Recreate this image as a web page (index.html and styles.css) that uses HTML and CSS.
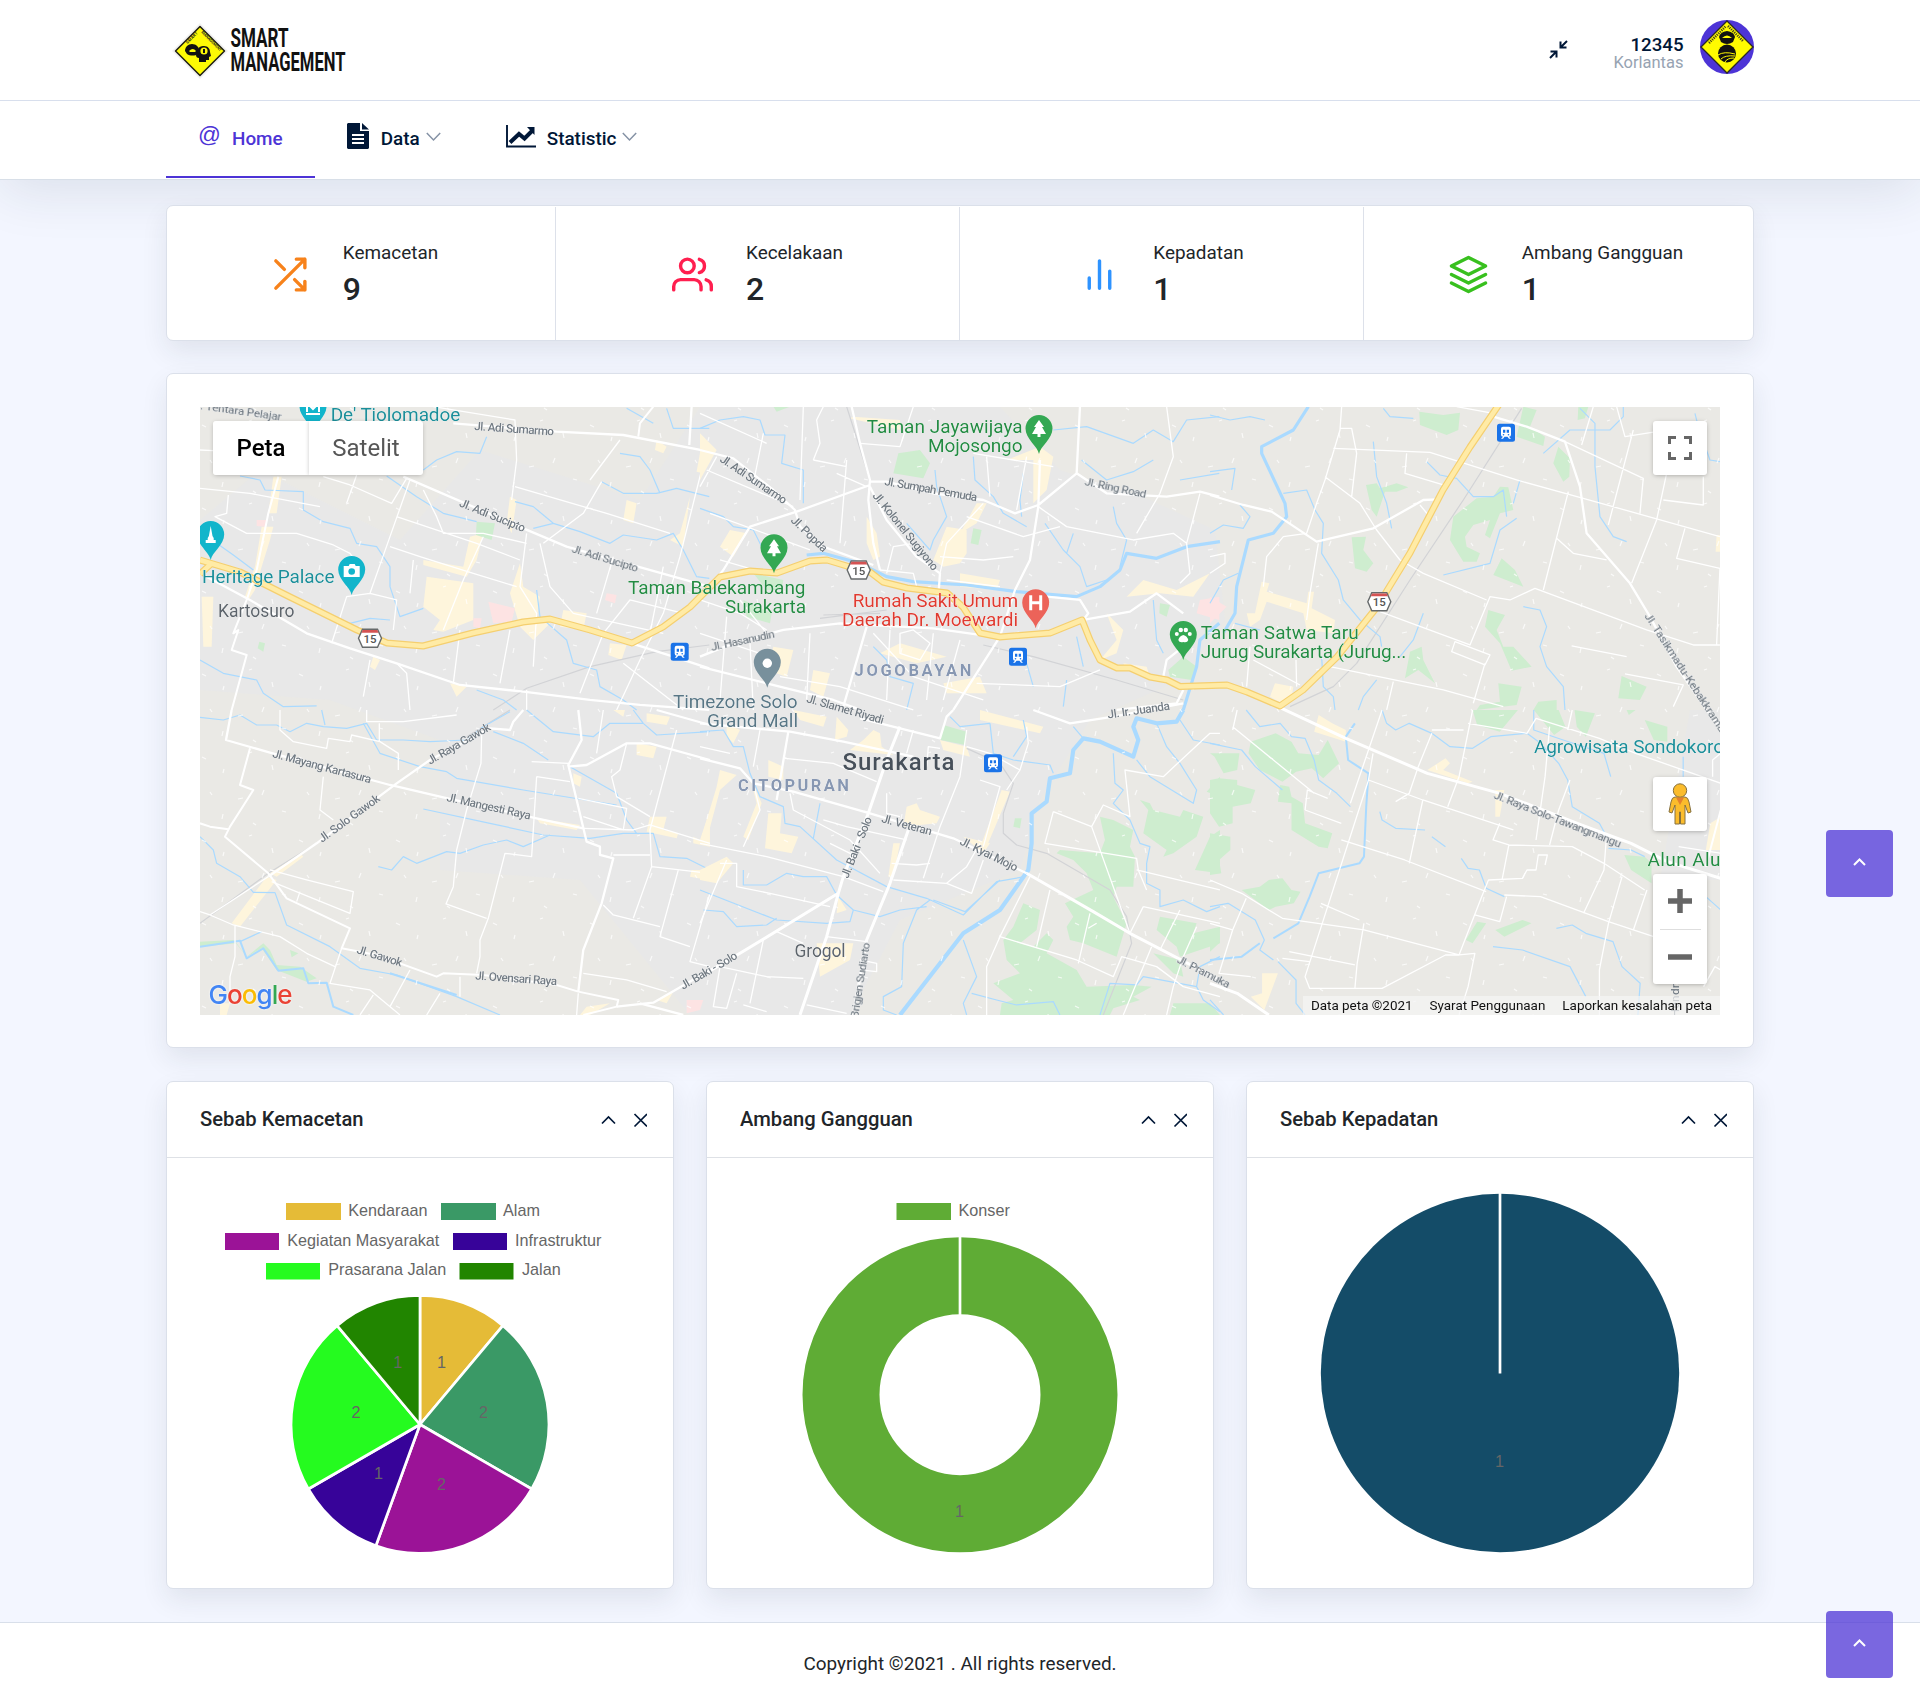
FILE: index.html
```html
<!DOCTYPE html>
<html lang="id">
<head>
<meta charset="utf-8">
<title>Smart Management</title>
<link rel="stylesheet" href="styles.css">
</head>
<body>
<header class="topbar">
  <div class="container topbar-inner">
    <svg class="logo" width="190" height="60" viewBox="166 21 190 60" role="img" aria-label="Smart Management">
      <path d="M200 23 228 51 200 79 172 51Z" fill="#f1f1f1"/>
      <path d="M200 26.500 224.500 51 200 75.500 175.500 51Z" fill="#fdfa05" stroke="#1d1d12" stroke-width="1.500" stroke-linejoin="round"/>
      <text class="logo-sign" transform="translate(187.500 44) rotate(-45)" textLength="15">SMART</text>
      <text class="logo-sign" transform="translate(201 32.500) rotate(45)" textLength="27">MANAGEMENT</text>
      <path d="M185 51c0-4 3-7 7-7s7 3 7 6l-1 4c-3 2-8 2-11 0z" fill="#111"/>
      <path d="M189 51q4-4 7 0l-1 1h-5z" fill="#fdfa05"/>
      <path d="M198 50c0-3 3-4 6-4 4 0 6 3 6 6l1 4-2 1v3h-3v2h-7v-4c-2 0-3-1-3-3z" fill="#111"/>
      <circle cx="204" cy="51" r="3.600" fill="#fdfa05"/><path d="M203 49h2v4h-2z" fill="#111"/>
      <text class="logo-word" x="230.500" y="47" textLength="58" lengthAdjust="spacingAndGlyphs">SMART</text>
      <text class="logo-word" x="230.500" y="71" textLength="115" lengthAdjust="spacingAndGlyphs">MANAGEMENT</text>
    </svg>
    <div class="user">
      <svg class="shrink" width="19" height="19" viewBox="0 0 19 19"><path d="M18 1 12 7M11.500 1.500v6h6M1 18l6-6M1.500 11.500h6v6" fill="none" stroke="#001737" stroke-width="2"/></svg>
      <div class="user-text"><span class="user-name">12345</span><span class="user-role">Korlantas</span></div>
      <svg class="avatar" width="54" height="54" viewBox="0 0 54 54">
        <circle cx="27" cy="27" r="27" fill="#4d34d6"/>
        <path d="M27 1 53 27 27 53 1 27Z" fill="#fffb00" stroke="#2b2920" stroke-width="1.300"/>
        <path d="M9 23 26 6M28 6 43 21" stroke="#44421a" stroke-width="2.500" stroke-dasharray="1.200 1"/>
        <path d="M19 17q1-5 8-6 7 1 8 6l-2 5q-6 4-12 0z" fill="#111"/><path d="M22 18q5-5 10 0z" fill="#fffb00"/>
        <circle cx="27" cy="33.500" r="9" fill="#111"/><path d="M18 35q6-4 17-1M21 39q4-4 14-3M25 42q2-4 9-4" stroke="#fffb00" stroke-width="1" fill="none"/>
      </svg>
    </div>
  </div>
</header>
<nav class="menu">
  <div class="container menu-inner">
    <a class="menu-item active"><span class="at">@</span><span>Home</span></a>
    <a class="menu-item">
      <svg class="doc" width="22" height="26" viewBox="0 0 22 26"><path d="M1 0h12v8h9v17l-1 1H1l-1-1V1z" fill="#001737"/><path d="M15 0v6.500h7z" fill="#001737"/><path d="M5 12h12M5 16h12M5 20h12" stroke="#fff" stroke-width="1.800"/></svg>
      <span>Data</span>
      <svg class="caret" width="15" height="10" viewBox="0 0 15 10"><path d="M.8 1 7.500 8 14.200 1" fill="none" stroke="#8592a5" stroke-width="1.500"/></svg>
    </a>
    <a class="menu-item">
      <svg class="trend" width="30" height="23" viewBox="0 0 30 23"><path d="M1 0v21.500h29" fill="none" stroke="#001737" stroke-width="1.900"/><path d="M4 17.500 13 9l5.500 4.500L26 6" fill="none" stroke="#001737" stroke-width="4"/><path d="M21 2h7.500v8z" fill="#001737"/></svg>
      <span>Statistic</span>
      <svg class="caret" width="15" height="10" viewBox="0 0 15 10"><path d="M.8 1 7.500 8 14.200 1" fill="none" stroke="#8592a5" stroke-width="1.500"/></svg>
    </a>
  </div>
</nav>

<main class="container content">
  <section class="card stats">
    <div class="stats-row">
      <div class="stat">
        <svg class="stat-icon orange" viewBox="0 0 24 24"><path d="M16 3h5v5M4 20 21 3M21 16v5h-5M15 15l6 6M4 4l5 5"/></svg>
        <div><p class="stat-label">Kemacetan</p><p class="stat-value">9</p></div>
      </div>
      <div class="stat">
        <svg class="stat-icon red" viewBox="0 0 24 24"><path d="M17 21v-2a4 4 0 0 0-4-4H5a4 4 0 0 0-4 4v2M23 21v-2a4 4 0 0 0-3-3.870M16 3.130a4 4 0 0 1 0 7.750"/><circle cx="9" cy="7" r="4"/></svg>
        <div><p class="stat-label">Kecelakaan</p><p class="stat-value">2</p></div>
      </div>
      <div class="stat">
        <svg class="stat-icon blue" viewBox="0 0 24 24"><path d="M18 20V10M12 20V4M6 20v-6"/></svg>
        <div><p class="stat-label">Kepadatan</p><p class="stat-value">1</p></div>
      </div>
      <div class="stat">
        <svg class="stat-icon green" viewBox="0 0 24 24"><path d="M12 2 2 7l10 5 10-5zM2 17l10 5 10-5M2 12l10 5 10-5"/></svg>
        <div><p class="stat-label">Ambang Gangguan</p><p class="stat-value">1</p></div>
      </div>
    </div>
  </section>

  <section class="card map-card">
    <div class="map">
      <svg class="map-canvas" width="1520" height="608" viewBox="200 407 1520 608">
        <defs>
          <pattern id="lanes" width="97" height="83" patternUnits="userSpaceOnUse"><path d="M8 10l4 2M30 22l-1 4M55 6l3-1M78 18l1 5M16 45l2 3M44 52l5-1M70 43l-2 5M88 64l4 1M28 72l1-5M59 76l3 2" stroke="#fff" stroke-width="1.200"/></pattern>
          <g id="train"><rect x="-9" y="-9" width="18" height="18" rx="2.500" fill="#1a73e8"/><path d="M-3-6h6q2 0 2 2v6q0 2-2 2l2 2H3L1.500 4h-3L-3 6h-2l2-2q-2 0-2-2v-6q0-2 2-2z" fill="#fff"/><path d="M-3-3h2.300v3H-3zM.7-3H3v3H.7z" fill="#1a73e8"/><circle cx="-2.500" cy="2" r=".8" fill="#1a73e8"/><circle cx="2.500" cy="2" r=".8" fill="#1a73e8"/></g>
          <path id="pin" d="M0 0C-1.500-8-13.500-15-13.500-25.500a13.500 13.500 0 0 1 27 0C13.500-15 1.500-8 0 0z"/>
          <path id="tree" d="M0-34-5-27h2l-4 7h5.500v3h3v-3H7l-4-7h2z" fill="#fff"/>
          <g id="shield"><path d="M-7.500-9h15L11.500 0 7.500 9h-15L-11.500 0z" fill="#fff" stroke="#666a6b" stroke-width="1.400"/><path d="M-7.300-8.300H7.300L8.500-5.500h-17z" fill="#d55353"/><text class="shield-no" y="4.500">15</text></g>
        </defs>
        <rect x="200" y="407" width="1520" height="608" fill="#eae9e5"/>
        <path d="M200 520 260 470 400 540 480 450 640 500 700 407 1000 407 1060 470 1150 500 1215 530 1225 620 1180 680 1090 720 1040 800 1020 870 900 920 850 1015 690 1015 580 880 440 870 440 740 330 700 200 690zM1690 710h30v170h-60z" fill="#e8e8e8"/>

        <g class="tile" transform="translate(190 400) scale(.3333)">
          <path class="built" d="M250 230h25l-15 110h-25zM215 380h35l-10 40-25 80-20 70-20 30-10-10 30-90zM840 410l40-10-20 80-30 50-130-35v-15l120 20zM710 530l140 20v110l-90 35-30-5 20-30-50-40zM990 490l10 70 50 30-10 70h50l-60 60-40-40-30-100zM1120 630l70 10-10 50-70-10zM960 290l20 10-15 100-15-30zM1310 300l30 10-10 60-30-10zM1400 120l30 20-10 20-25-10zM1530 160l28-10-18 70-20-5zM1500 290l-20 150-40-20 30-20zM35 590h35l-5 150H40zM1260 730l50 5-15 45-40-15zM780 850l50 10-30 30zM550 770l20 10-15 30-15-10z"/>
          <path class="clinic" d="M895 605l80 20-10 40-55 5zM850 655h25l-5 30-20-5zM1250 580l30 5-5 25-30-10zM200 360h30l-5 20-25-2z"/>
          <path class="park" d="M860 365l55 5-10 50-47-15zM208 725l17 5-5 25-17-10z"/>
          <path class="rail" d="M910 930 1010 865 1200 800 1400 755 1558 735"/>
          <path class="creek" d="M150 228 210 240 225 270 340 275 340 330 400 365 480 385 500 430 560 440 600 500 600 560 630 650 700 625M590 228 680 290 760 340 860 365M700 210 740 180 800 155 870 160 890 110M975 305 1030 320 1090 370 1170 395 1260 430 1300 405 1400 420 1450 400 1480 450 1520 530 1558 535M1030 385 1090 370M1235 245 1300 280 1400 280 1460 265 1558 290M1290 160 1350 170 1380 210 1410 280M1040 570 1050 650 1130 720 1150 790 1220 810 1230 860 1300 900 1340 930M480 670 540 655 600 660M80 430 130 465 190 510M30 780 100 820 200 840 220 880 280 920 380 918M860 870 940 900 980 930M1310 25 1390 70M1430 25 1450 85 1558 85"/>
          <path class="lane" d="M730 20 975 60 980 180 965 300M1200 240 1290 120M500 225 470 310M400 230 480 255 605 310 650 235M660 240 600 410 540 580 470 590 425 730M30 265 180 280 390 320M115 285 110 340 75 350 170 400 320 400 430 435 480 460 510 500M620 350 860 430 990 480M975 260 1180 320 1250 340 1440 400M700 270 740 350 760 400 880 400 1010 430M600 440 690 470 850 520 980 560M1010 400 990 560 1040 640 1030 800M670 480 660 580M540 580 620 600 610 690M540 780 520 890M620 790 650 820 660 930M810 690 790 850M960 690 930 850M1010 870V930M1480 640 1320 600 1240 700 1170 880M1270 470 1220 640M1420 500 1380 700M1540 190 1470 470 1420 640 1350 780 1280 930M30 150 70 152M1235 245 1180 340 1060 430M1050 430 1080 560 1150 640 1420 700M880 410 820 540 760 690M1300 790 1480 930"/>
          <path class="street" d="M265 230 235 340 200 510 170 600 130 700 145 690 125 750 170 765 125 930M1390 20 1350 70 1345 110"/>
          <path class="road" d="M790 70 1100 95 1300 105 1558 155M640 230 1000 385 1130 440 1558 560M30 520 180 600 350 700 480 745 620 790 810 855 1000 875 1200 900 1350 915 1558 930M1325 730 1450 770 1558 805M1505 20 1498 135"/>
        </g>
        <g class="tile" transform="translate(700 400) scale(.3333)">
          <path class="built" d="M740 380l60 10v70l-20 30-50 10-30-20zM780 520l120 20-10 30-110-10zM600 730l140 40-90 20-110-30zM730 850l110-20 20 50H740zM460 50l140 10v30L450 55zM1020 140l40 30-20 100-40 40V180h-80zM500 350l30 50 10 70-20 10-20-50zM830 310h30l-30 60-50 30zM0 100l50 50L0 240zM90 390l50 10-40 70-40-30zM1330 540l100 30 100-50-50 70-100-10-100 10zM1220 640l50 50-20 70-50 20 50-60zM1270 790l70 10 10 30-70-20zM340 810l50 10-20 70-40-20zM220 740l60 10-20 80-60-20z"/>
          <path class="park" d="M595 160l65-10 30 40-20 45-90-15zM820 385l25 5-10 45-23-5zM160 520l90 20-5 30h-45zM130 600l85 40-5 30-70-20zM1380 610l30 5-10 35-22-10zM1450 770l40 30-15 40-65-10-5-20zM220 20h50l-40 15z"/>
          <path class="clinic" d="M1500 600l58-10v70l-68-20z"/>
          <path class="rail" d="M440 20 510 240M850 735 1000 770 1250 840 1450 900M360 655 560 630M370 645 540 640"/>
          <path class="creek" d="M0 85 60 60 130 50 180 60 195 105 255 105 245 190 310 210 310 310M0 325 70 350 100 380 160 390 190 450M820 170 825 240 880 290 910 340 980 380M970 220 960 300 965 350M705 210 710 260 740 350 700 420 690 450 620 370M1145 180 1220 240 1300 215 1360 180M1060 90 1160 80 1300 130 1360 90 1420 125 1460 60 1558 50M1035 370 1090 450 1140 500 1160 560 1220 540M1240 320 1250 370 1280 420 1260 500M1360 600 1370 720 1390 760M1130 710 1150 800M520 740 560 780 570 830 640 850 620 930M980 790 1000 860M1100 840 1090 920M1120 400 1100 460M1440 240 1558 220"/>
          <path class="canal" d="M320 465 370 460 480 490 560 530 640 545 800 555 950 575 1130 590 1200 560 1260 510 1280 460 1370 475 1460 440 1560 425M1558 670 1500 720 1490 800 1450 930"/>
          <path class="lane" d="M310 20 300 300M370 20 350 60 360 130 340 180M20 210 280 320M50 170 0 260M30 340 330 450M640 20 600 140 480 130M820 160 1060 200M1015 320 1100 380 1300 420 1420 400 1460 430 1470 520 1440 550M800 350 970 410 1080 380M1400 20 1420 170 1380 280 1310 400M1500 280 1460 430M720 470 850 480 940 470M740 540 900 560M850 310 740 430 720 520M600 700 640 690 690 730 660 780 600 760zM860 170 870 290M980 170 950 330M0 600 120 640 200 690M120 600 200 700M520 700 640 830 850 900M240 830 420 860 640 930M330 700 320 900M150 730 160 930M830 850 1080 860 1200 810M410 220 500 260M440 180 420 430M540 510 640 520 650 560M0 40 200 130M190 100 160 250M340 180 440 200M60 480 200 520M560 520 580 440 640 430M700 700 680 900M780 720 730 900M570 690 560 900M80 650 60 900M0 700 180 760"/>
          <path class="road" d="M455 20 480 130 510 240 505 300 520 430 540 510M0 600 70 510 150 380 290 335 510 255M0 150 100 175 220 270 285 330 300 380 370 440 520 495M510 245 560 245 700 280 850 300 945 340 1015 315 1130 220 1140 20M510 260 560 360 650 470 720 520 715 590M1130 220 1220 280 1400 290 1500 275 1558 290M1020 180 1015 320 990 480 945 570 900 710 760 930M0 770 100 730 250 690 420 670 700 685 840 705M0 800 200 850 400 900 470 925M1040 590 1140 600 1165 640 1150 660 1290 635 1370 580 1450 640M500 680 430 920M1450 860 1390 830 1400 780 1450 740M1450 870 1430 910 1250 930"/>
        </g>
        <g class="tile" transform="translate(1210 400) scale(.3333)">
          <path class="built" d="M155 545l23 5-8 25 120 35 5-35h17l-7 50 70 35-5 40-80-10-10-50-110-35-20 55-30 20-10-40h25zM195 850l55 10-5 30-30 20-35-20zM1520 405h12v50h-15z"/>
          <path class="park" d="M628 35l72 10 50-7-5 52-35 15-80-30zM940 20l40 10-20 50 45 30-5 28-80-28zM1105 20h30l-10 35-22 5zM1045 140l35 35-2 55-18 15-30-55zM468 255l32-5 10 15 50-15 35 12-35 13h-35l-25 75-15-20zM800 295l50-5 20-30 25 2 15 68-40 10-30 75-15-10 15-45-50 15-25 35 5 30 40 20-10 25h-40l-40-65 10-70zM425 412l43-2-8 40 30 40-20 25-35-10zM875 475l40 35 25 50-90-35zM835 630l50 15-25 45 20 50h30l55 60-60 12-35-82-45-50zM600 755l35-15 5 40 35 70-50-40-40 25zM865 850l70 10-15 55-120 15 10-15 60-10zM1235 828l75 32-20 40-65-5zM985 905l55-5v30h-70z"/>
          <path class="clinic" d="M0 590l50 30-50 50z"/>
          <path class="rail" d="M935 25 760 300 600 540 440 790 370 860 240 920"/>
          <path class="creek" d="M220 280 290 270 315 330 340 370 335 460 385 540 400 600 450 660 510 710 515 740M490 125 500 230 530 310 545 385M650 185 690 225 740 235 790 290 850 290 880 270 890 350M920 355 870 390 840 490 700 525M1000 160 1080 90 1200 90 1240 50 1240 20M1110 25 1155 70 1155 200 1170 350 1210 410 1250 425M0 45 60 60 120 50 165 60M0 215 75 205 65 270M0 400 40 375 100 385 120 350 90 315M520 25 540 50 610 55M940 620 990 630 1010 680 990 740 1010 800 1060 860 1065 930M640 640 610 720 570 770M500 840 460 890 445 930M335 770 340 860 370 890 375 930M1455 40 1465 80 1500 180 1530 185M930 240 910 310M0 610 40 540 85 520M75 670 150 690"/>
          <path class="canal" d="M295 20 250 90 155 140 155 160 225 310 230 350 190 400 115 420 100 480 80 560 75 640 40 700"/>
          <path class="lane" d="M395 20 390 90 345 240 320 310 290 400 220 410 170 470 160 560M345 230 450 310 500 390 570 480 640 520 830 600M370 145 660 157 920 240 1120 295 1530 410M390 85 425 85 440 160 425 290M590 160 585 220 700 255M510 635 780 735 840 590 900 600 975 565 1310 690 1450 735 1530 735M1075 275 1000 570M1040 415 1090 460 1190 480M325 430 300 580M1065 125 1300 235 1290 340M1370 220 1340 360 1265 550M1150 20 1115 135M1270 90 1195 375M1360 300 1480 315 1480 230M1425 385 1400 475 1530 505M735 725 840 765 825 795 725 755zM360 800 700 870 880 920M550 845 530 930M825 790 790 910M130 780 270 855M110 860 120 740M260 860 258 780M740 20 850 40M1220 20 1245 110 1340 95M1085 738 1250 770M1245 822 1420 855 1390 920M0 470 45 460 45 490 0 520M300 580 290 660M630 315 655 345M1530 505 1520 735"/>
          <path class="road" d="M0 285 100 315 185 335 320 425 490 385 640 300 685 298M850 50 950 80 1065 125 1110 260 1130 400 1260 550 1320 650 1400 800 1490 930 1530 980"/>
        </g>
        <g class="tile" transform="translate(190 710) scale(.3333)">
          <path class="built" d="M230 500l30 10-110 140-25-10zM240 490l90-60 10 10-80 60zM1380 320h50l-10 40 45 10-5 15-90-20zM1340 100l60 10-10 35-50-10zM1370 10l70 10-10 25-60-10zM1150 190l25 10-5 30-20-10zM1040 325l130 20-10 15-110-20zM1510 380l20 10 30-90v110l-50-10zM1505 480h55l-5 30-55-10zM1400 870l50-25-20 35zM90 880h30l-10 35H90zM1190 890l70-10-60 35h-30zM1270 0h35l-5 20z"/>
          <path class="clinic" d="M1490 870h50l-10 30-40 10z"/>
          <path class="park" d="M30 695l100-5 40 50 50-40 20 20 20 45 70 5 50 35-30 10-90-35-45-65-45 25-30-40-110 10zM300 720l25 10-20 12z"/>
          <path class="rail" d="M30 640 235 490 380 400M830 80 960 0"/>
          <path class="creek" d="M30 22 100 30 150 15 200 45 260 45 300 65 350 40 400 50 470 55 530 40 560 90 640 90 720 95 830 90 880 50 960 5M395 0 405 45M30 380 70 420 80 460 150 500 190 547 255 548 290 645 420 710 510 775 620 795 800 860 930 915M520 40 570 130 690 170 770 185 800 205 1000 240 1280 285M700 297 900 340 1060 375 1200 385 1300 370 1390 370 1410 440 1490 445 1550 475M565 470 605 480 640 440 680 460 770 425 810 430 880 405 950 390 1000 410 1080 375M910 65 1000 100 1075 150M1010 0 1090 65 1210 80 1260 40 1360 40 1400 75 1560 65M1140 170 1280 250 1310 330 1340 370M150 695 215 665M1330 0 1360 40"/>
          <path class="brook" d="M30 710 150 692 170 745 220 715 265 782 340 775 355 820 410 818 430 890 490 915M600 790 800 855"/>
          <path class="lane" d="M235 500 60 615 30 605M60 615 130 645 270 680 350 730 435 770M135 645V740L120 800V880M240 480 350 510 490 545 480 610 245 515M320 575 330 545M270 0V60L310 95 410 115 415 85 480 95 485 75 570 95 625 130V180M400 200 390 300 430 330M530 0V35L640 35 800 15M568 40V95M875 75 873 160 830 300 800 420 790 530 768 582 890 625M1040 200 1025 440 945 430 895 625 870 690V740L860 790M1040 200 1140 215M455 715 420 820 540 840 630 915M660 780 600 890M750 850 710 915M1240 0 1220 130M1310 100 1290 180 1265 200 1280 260 1380 320M1460 60 1380 360 1385 470 1330 625M1165 265 1310 295 1300 360 1180 320M1270 435H1380M1385 470 1560 490M1465 480 1410 680 1500 710M1240 585 1270 615 1410 650M1180 790 1310 810 1430 845M1180 355 1330 360 1380 345 1560 400M1560 550 1500 755 1560 770M1025 155 1135 160M810 800V860M1165 850 1160 915M550 855 510 915"/>
          <path class="street" d="M180 115 150 225 190 240 120 350 105 380 235 490 290 565 480 655 455 715 560 735 740 800 760 790 880 795M30 340 60 350 115 358M880 795 1100 825 1165 845 1285 870 1280 890 1180 915"/>
          <path class="road" d="M125 0 108 90 240 128 600 225 760 262 1040 325 1180 355M235 500 380 400 620 220 720 150 900 55 960 60 970 35 1000 0M1165 0 1175 90 1135 165 1190 395 1230 410V435L1270 445 1235 580 1180 720 1165 845M1135 170 1190 165 1310 100 1380 100 1560 150M1280 890 1390 878 1560 780M1350 880 1480 915M1400 0 1560 45"/>
        </g>
        <g class="tile" transform="translate(700 710) scale(.3333)">
          <path class="built" d="M490 90l30-30 20 10 5 40 35 25-130-15zM60 180l50 15-50 45-40 150-15-10 45-150zM205 150l45 20v40l-45-10zM620 290l30-10 10 20 60 20-10 20-100 10zM205 310h40l-5 60 55 10-20 50-80-15zM0 480l80-40 20 20-50 60-50-10zM350 700h110l-10 50-90 50zM415 560l25 40-30 10zM905 240l25 5-70 165-15-10zM720 90l80 20 10 30-80-20zM840 0l190 50-10 20-180-40zM280 0l100 20-10 30-70-20zM410 20l35 40-5 20-35 10zM80 40l40 20-20 40-20-20zM580 400h20l-20 100h-15zM150 200l35 80-40 110-15-10 40-100zM790 380l80 20-20 30z"/>
          <path class="park" d="M730 45l70 20-5 40-73-15zM945 325h20l-5 30-20-5zM1320 270l30 10 10 20 80 20 10-20 60 20-20 60-70 50-30 10 10-20-70-50 15-70zM1200 320l40 10 60 30-10 50 15 30-5 90h-50l-10 30 40 80-30 100-100-40-40-10-10-40 20-30-25-40 85-40-20-50-40-40-50-20 10-10 120 10 15-40zM970 580l50 20-10 60-50 40 40 10 40-40 20 20-20 40 90 50 30 50 140-5 55 5-55 30 20 10-80 25-10 20H900l5-35 35-10-60-50 80-30-40-40-10-60 30-40zM1380 620l110 20-10 30 80-20v50l-120 40-10-30-60-50zM1360 730l80 20 10 50-30-10zM1560 360l-30 20-45 100 75 10zM1560 200l-40 45 40 15zM1420 880h110l30 35h-150z"/>
          <path class="rail" d="M800 115 900 160 940 220 910 310V370L950 405 1040 430 1230 540 1280 620 1295 700 1210 915"/>
          <path class="creek" d="M0 65 70 60 100 110 130 110 150 190 180 260 250 290 255 340 300 350 410 450 560 530 680 565 790 615 890 515 975 500M690 570 650 600 610 700 605 830 550 860V900L590 915M130 480V525L200 525 260 490 310 500 380 500 410 555 460 600 540 620 600 600 680 590M0 540 230 630 380 640 450 635 460 600M10 600 70 605 110 650 200 645 230 625M790 690 830 800 790 880 800 915M815 850 890 870 950 885 1060 875 1080 915M1240 130 1245 220 1270 240 1240 280 1290 330 1320 400 1350 410 1340 460V520L1380 540V590L1450 570 1520 605 1560 590M1310 150 1350 200 1480 280 1490 240 1440 160 1400 110 1370 40M1200 915 1230 820 1310 825 1330 800 1490 830 1500 770 1560 740M1490 830 1510 870 1560 905M870 40 880 130 940 150 1050 165 1060 190M360 280 340 385M750 20 780 50 870 40M970 30 980 80 940 140M1440 30 1480 90 1560 105M1120 50 1150 85M700 570 795 605 900 510"/>
          <path class="river" d="M1450 0 1430 35 1370 40 1310 25 1300 50 1315 90 1300 140 1200 95 1150 85 1120 120 1110 190 1050 205 1040 275 995 310 995 400 985 480 900 600 790 670 600 915"/>
          <path class="lane" d="M0 400 200 440 430 500 550 545M270 250 280 300 450 390 540 490M255 145 400 160 530 215M800 60 780 200 720 350 670 505M680 170 685 110 720 115M575 460 650 465 690 460M580 510 740 520 800 470 840 400M740 520 815 550 850 450M840 210 900 230 850 410M800 110 870 130 960 180 920 240M1060 305 1035 400 1310 445 1315 480 1340 540M1060 305 1175 350 1210 285 1290 320 1275 180 1390 200 1530 70 1560 70M1175 350 1290 670M990 500 900 680 860 770V915M900 680 1130 750 1240 800 1265 740 1370 770 1450 830 1560 860M1050 540 1010 710M1170 610 1135 760M1165 655 1190 640M1330 590 1290 670M1355 710 1270 915M1440 600 1380 720M1490 650 1450 740 1420 830 1400 915M1330 590 1560 640M1310 480 1560 540M80 450 0 640M60 460H110V530L210 550 390 590M230 665 310 700M190 690 150 880M60 770 200 800 310 805M60 770 40 890 80 895 110 790M130 885 200 905M380 680 500 695M320 885 440 910M480 750 530 760V785L480 780M180 60 160 170M0 110 90 130M980 50 985 100 960 180M370 330 440 350 620 390M130 410 180 300 160 220M560 250V310L600 320M390 400 470 440M640 60 620 130"/>
          <path class="road" d="M0 40 270 65 430 95 570 125 640 140M0 145 120 175 160 220 280 245 510 310 760 385 980 490M265 65 230 270M1000 0 1110 40 1240 20 1450-20M480 25 720 85 740 20 760 0"/>
          <path class="avenue" d="M980 490 1180 605 1290 670 1560 810M600 50 560 150 505 310 430 500 415 550 380 680 300 915M415 550 120 730 0 800M625 360 570 520 500 690 460 915"/>
        </g>
        <g class="tile" transform="translate(1210 710) scale(.4528 .3333)">
          <path class="built" d="M240 15l30 25 30 20v35l-70-30zM520 145l10 15-15 20 65 35-10 5-90-40zM630 240h20l-10 80h-10zM115 790h35l-30 110-30-40 25-10zM1105 340l23-20v100h-33z"/>
          <path class="park" d="M145 70l35 25 15 35 45 5 20-45 25 70-35 45-25-30-35 10-30 30-50-35-25-50 5-35zM0 130h65l-5 50-30 10-20-50zM20 205l40 5v15l40 15-10 40-40 10v50l-30 10-20-40V210zM155 225l20 5 5 30 25 20 5 60 60 30-10 45-20-5-60-50v-80l-30-5zM580 0h100l-40 65-50-20zM715 0h55l15 50-25 25zM805 0l45 10-20 70-20-30zM960 30l50 20v45l-30-5zM70 540l40-10 20-20 30-5 20 35 20 5-15 35-40 10-15 10-30-30zM590 635l20 5-30 60-15-10zM630 660l60-30 20 10-60 40zM915 435l45 5 15 20v60l-45-40zM0 370l45 10v40l-25 30 5 40-25 5zM0 680l20 20-20 25zM920 0h20l-15 15z"/>
          <path class="creek" d="M80 0 110 50 155 40 180 80 210 85 230 150 240 210 280 250 310 290M0 100 70 120 100 170 160 240M380 0 390 40 410 60 440 40 490 70 530 110 580 115 620 80 700 70 730 100 770 160 790 210 800 290 860 340 880 390M375 305 380 330 410 355 475 360M490 380 520 410M555 445 570 475 595 480 610 535 650 560M765 655 800 645 830 670 890 695 910 770 950 820 945 915M625 710 690 720 795 770 830 860M0 590 40 580 100 630 120 690 110 720 140 750M150 755 190 810V880L210 915M880 415 930 420 960 440M1095 560 1128 600M715 0V60L780 90 870 130 885 200M1045 140V200M0 870 30 915"/>
          <path class="brook" d="M320 40 300 80 305 150 350 190 345 290 340 440 330 460 240 490 220 560 195 640 140 685M0 750 70 740 110 700"/>
          <path class="lane" d="M0 510 70 550 160 625 340 660 550 735 560 700 600 560 615 510 690 505 700 480 720 480 725 435 745 435 740 465M50 50 230 250M60 0 50 60M350 210 210 800 220 835 380 835 520 735 550 735M360 130 350 210 470 270 670 360M380 0 310 280M210 300 215 240 260 265M470 270 440 460M290 340 210 300M290 390 430 450 610 545M490 70 460 170 440 250 410 275M560 60H490M580 0 550 200 525 290M750 50 740 200 720 390M640 340 625 390 660 405 800 410 870 460 960 540M660 405 645 510M795 210 770 300 750 405M570 40 700 70 720 25 860 85 940 130 1128 220M650 555 730 560 880 635 980 680M655 560 640 635 585 615M880 640 860 780V915M550 735 585 730 570 830 550 915M875 390 870 480 825 610M965 540 935 660M340 640 325 760 320 835M245 580 330 630M175 725 320 765M80 565 50 660 0 640M50 660 20 790 90 800M160 745 220 755M910 500 880 640M1128 130 1110 150V200M800 0 790 60M1035 410 1128 430M1090 830 1115 770 1128 780"/>
          <path class="avenue" d="M150-10 300 85 480 190 640 250 820 345 930 400 1010 455 1128 505M0 820 60 850 130 915"/>
          <path class="street" d="M1128 300 1095 470"/>
        </g>
        <rect x="200" y="407" width="1520" height="608" fill="url(#lanes)" opacity=".75"/>

        <g class="highway">
          <path class="casing" d="M200 574 212 563M200 560 240 572 290 597 357 630 387 643 423 646 473 633 523 622 550 619 590 630 632 643 663 627 690 607 720 577 750 571 777 573 810 561 827 560 850 567 870 572 883 582 907 588 947 593 963 607 980 633 1000 637 1050 633 1082 620 1090 640 1100 660 1117 668 1130 668 1150 677 1167 680 1180 686.500 1227 685 1247 692 1280 706 1303 690 1337 657 1377 607 1410 553 1443 490 1470 447 1500 403"/>
          <path class="surface" d="M200 574 212 563M200 560 240 572 290 597 357 630 387 643 423 646 473 633 523 622 550 619 590 630 632 643 663 627 690 607 720 577 750 571 777 573 810 561 827 560 850 567 870 572 883 582 907 588 947 593 963 607 980 633 1000 637 1050 633 1082 620 1090 640 1100 660 1117 668 1130 668 1150 677 1167 680 1180 686.500 1227 685 1247 692 1280 706 1303 690 1337 657 1377 607 1410 553 1443 490 1470 447 1500 403"/>
        </g>

        <g class="street-name">
          <text transform="translate(191 408) rotate(8)" textLength="91">Jl. Tentara Pelajar</text>
          <text transform="translate(474 430) rotate(4)" textLength="80">Jl. Adi Sumarmo</text>
          <text transform="translate(458.500 506) rotate(22)" textLength="70">Jl. Adi Sucipto</text>
          <text transform="translate(571 552) rotate(17)" textLength="69">Jl. Adi Sucipto</text>
          <text transform="translate(719 461) rotate(34)" textLength="78">Jl. Adi Sumarmo</text>
          <text transform="translate(790 521) rotate(44)" textLength="46">Jl. Popda</text>
          <text transform="translate(872 496) rotate(51)" textLength="97">Jl. Kolonel Sugiyono</text>
          <text transform="translate(884 485) rotate(10)" textLength="94">Jl. Sumpah Pemuda</text>
          <text transform="translate(1084 485) rotate(12)" textLength="63">Jl. Ring Road</text>
          <text transform="translate(711.700 651) rotate(-12)" textLength="65">Jl. Hasanudin</text>
          <text transform="translate(805.700 702) rotate(16)" textLength="80">Jl. Slamet Riyadi</text>
          <text transform="translate(1108 718.500) rotate(-8)" textLength="63">Jl. Ir. Juanda</text>
          <text transform="translate(1644 616) rotate(57)" textLength="143">Jl. Tasikmadu-Kebakkramat</text>
          <text transform="translate(1493 798) rotate(21.500)" textLength="136">Jl. Raya Solo-Tawangmangu</text>
          <text transform="translate(271.700 757) rotate(15)" textLength="102">Jl. Mayang Kartasura</text>
          <text transform="translate(430 765) rotate(-30)" textLength="71">Jl. Raya Gawok</text>
          <text transform="translate(322 843) rotate(-36)" textLength="73">Jl. Solo Gawok</text>
          <text transform="translate(446 801) rotate(12.500)" textLength="86">Jl. Mangesti Raya</text>
          <text transform="translate(356 953) rotate(17)" textLength="47">Jl. Gawok</text>
          <text transform="translate(475 979.500) rotate(4)" textLength="82">Jl. Ovensari Raya</text>
          <text transform="translate(683 990) rotate(-30)" textLength="64">Jl. Baki - Solo</text>
          <text transform="translate(848 879) rotate(-68)" textLength="65">Jl. Baki - Solo</text>
          <text transform="translate(880.700 822) rotate(15)" textLength="52">Jl. Veteran</text>
          <text transform="translate(959 844) rotate(26)" textLength="63">Jl. Kyai Mojo</text>
          <text transform="translate(856 1032) rotate(-81)" textLength="90">Jl. Brigjen Sudiarto</text>
          <text transform="translate(1176 962) rotate(27)" textLength="58">Jl. Pramuka</text>
          <text transform="translate(1679 1034) rotate(-90)" textLength="50">Jl. Hendr</text>
        </g>
        <use href="#shield" x="370" y="638.300"/><use href="#shield" x="858.700" y="570"/><use href="#shield" x="1379.300" y="601.700"/>
        <use href="#train" x="679.700" y="651.700"/><use href="#train" x="1018" y="656.700"/><use href="#train" x="1506" y="432.700"/><use href="#train" x="993" y="763.300"/>

        <g class="pin-set">
          <g transform="translate(313 432)"><use href="#pin" fill="#12b5cb"/><path d="M-7-18H7M-6-30v10M6-30v10M-6-29l6 6 6-6" stroke="#fff" stroke-width="2" fill="none"/></g>
          <g transform="translate(210.700 560)"><use href="#pin" fill="#12b5cb"/><path d="M0-34 1.800-24 3-22v2h2v3H-5v-3h2v-2l1.200-2z" fill="#fff"/></g>
          <g transform="translate(351.700 595)"><use href="#pin" fill="#12b5cb"/><path d="M-8-29h5l1-2h5l1 2h4v11H-8z" fill="#fff"/><circle cy="-23.500" r="3.300" fill="#12b5cb"/></g>
          <g transform="translate(774 573.300)"><use href="#pin" fill="#34a853"/><use href="#tree"/></g>
          <g transform="translate(1039 454)"><use href="#pin" fill="#34a853"/><use href="#tree"/></g>
          <g transform="translate(1035.700 628.300)"><use href="#pin" fill="#ec6359"/><path d="M-5-33v15M5-33v15M-5-25.500H5" stroke="#fff" stroke-width="3"/></g>
          <g transform="translate(1183.300 660)"><use href="#pin" fill="#34a853"/><path d="M0-25q4 1 5 5-1 3-5 2-4 1-5-2 1-4 5-5z" fill="#fff"/><circle cx="-6.500" cy="-26" r="2" fill="#fff"/><circle cx="-2.500" cy="-30" r="2.200" fill="#fff"/><circle cx="2.500" cy="-30" r="2.200" fill="#fff"/><circle cx="6.500" cy="-26" r="2" fill="#fff"/></g>
          <g transform="translate(767.300 687.700)"><use href="#pin" fill="#78909c"/><circle cy="-24.500" r="4.700" fill="#fff"/></g>
        </g>

        <g class="place">
          <g class="teal">
            <text x="330.700" y="420.500" textLength="129.600">De' Tjolomadoe</text>
            <text x="202" y="582.500" textLength="132.500">Heritage Palace</text>
            <text x="1534" y="753" textLength="190">Agrowisata Sondokoro</text>
          </g>
          <g class="leaf">
            <text x="628" y="593.500" textLength="177.500">Taman Balekambang</text>
            <text x="725" y="612.500" textLength="81">Surakarta</text>
            <text x="866.700" y="432.500" textLength="156">Taman Jayawijaya</text>
            <text x="928" y="451.500" textLength="94.500">Mojosongo</text>
            <text x="1200.700" y="638.500" textLength="158">Taman Satwa Taru</text>
            <text x="1200.700" y="657.500" textLength="205.500">Jurug Surakarta (Jurug...</text>
            <text x="1647.500" y="866" textLength="84">Alun Alun</text>
          </g>
          <g class="medic">
            <text x="852.700" y="606.500" textLength="165.500">Rumah Sakit Umum</text>
            <text x="842" y="625.500" textLength="176">Daerah Dr. Moewardi</text>
          </g>
          <g class="slate">
            <text x="673" y="708" textLength="124.500">Timezone Solo</text>
            <text x="707" y="727" textLength="91">Grand Mall</text>
          </g>
          <text class="town" x="218" y="617.300" textLength="76.500">Kartosuro</text>
          <text class="town" x="794.500" y="956.500" textLength="51">Grogol</text>
          <text class="district" x="854.500" y="675.500" textLength="117">JOGOBAYAN</text>
          <text class="district" x="738" y="791" textLength="111">CITOPURAN</text>
          <text class="city" x="842.500" y="770" textLength="112">Surakarta</text>
        </g>
        <text class="google" x="208.500" y="1004" textLength="84"><tspan fill="#4285f4">G</tspan><tspan fill="#ea4335">o</tspan><tspan fill="#fbbc05">o</tspan><tspan fill="#4285f4">g</tspan><tspan fill="#34a853">l</tspan><tspan fill="#ea4335">e</tspan></text>
      </svg>
      <div class="map-type"><button class="type-on">Peta</button><button class="type-off">Satelit</button></div>
      <button class="map-btn fullscreen"><svg width="24" height="24" viewBox="0 0 24 24"><path d="M1.500 8V1.500H8M16 1.500h6.500V8M22.500 16v6.500H16M8 22.500H1.500V16" fill="none" stroke="#666" stroke-width="3"/></svg></button>
      <button class="map-btn pegman"><svg width="24" height="42" viewBox="0 0 24 42"><g fill="#fbbc2c" stroke="#85703f" stroke-width="1"><path d="M7 14h10q3 0 4 5l2 10-3 1-3-8v19h-4.500V29h-1v12H7V22L4 30l-3-1 2-10q1-5 4-5z"/><circle cx="12" cy="7.500" r="6.700"/></g><path d="M8 14.500h8L12 22z" fill="#e5812d"/></svg></button>
      <div class="zoom"><button><svg width="24" height="24" viewBox="0 0 24 24"><path d="M12 0v24M0 12h24" stroke="#666" stroke-width="5.500"/></svg></button><i></i><button><svg width="24" height="24" viewBox="0 0 24 24"><path d="M0 12h24" stroke="#666" stroke-width="5.500"/></svg></button></div>
      <div class="credits"><span>Data peta ©2021</span><span>Syarat Penggunaan</span><span>Laporkan kesalahan peta</span></div>
    </div>
  </section>

  <div class="charts">
    <section class="card chart-card">
      <header class="chart-head"><h2>Sebab Kemacetan</h2>
        <svg class="tools" width="46" height="16" viewBox="0 0 46 16"><path d="M1 11.500 7.500 5 14 11.500M33.500 2 46 14.500M46 2 33.500 14.500"/></svg></header>
      <svg class="chart" width="506" height="430" viewBox="167 1158 506 430">
        <g><path fill="#e5bb37" d="M286 1203h55v17h-55z"/><path fill="#3a9966" d="M441 1203h55v17h-55z"/><path fill="#9b1397" d="M225 1233h54v17h-54z"/><path fill="#370399" d="M453 1233h54v17h-54z"/><path fill="#25fb1f" d="M266 1263h54v16.500h-54z"/><path fill="#218500" d="M459.500 1263h54v16.500h-54z"/></g>
        <g class="legend"><text x="348.300" y="1215.700">Kendaraan</text><text x="503" y="1215.700">Alam</text><text x="287.300" y="1245.700">Kegiatan Masyarakat</text><text x="515" y="1245.700">Infrastruktur</text><text x="328.300" y="1275">Prasarana Jalan</text><text x="522" y="1275">Jalan</text></g>
        <g class="slices" transform="translate(420 1424.500)">
          <path fill="#e5bb37" d="M0 0V-129A129 129 0 0 1 82.900-98.800Z"/>
          <path fill="#3a9966" d="M0 0 82.900-98.800A129 129 0 0 1 111.700 64.500Z"/>
          <path fill="#9b1397" d="M0 0 111.700 64.500A129 129 0 0 1-44.100 121.200Z"/>
          <path fill="#370399" d="M0 0-44.100 121.200A129 129 0 0 1-111.700 64.500Z"/>
          <path fill="#25fb1f" d="M0 0-111.700 64.500A129 129 0 0 1-82.900-98.800Z"/>
          <path fill="#218500" d="M0 0-82.900-98.800A129 129 0 0 1 0-129Z"/>
        </g>
        <g class="value"><text x="441.500" y="1368">1</text><text x="483.500" y="1417.500">2</text><text x="441.500" y="1489.500">2</text><text x="378.500" y="1478.500">1</text><text x="356" y="1417.500">2</text><text x="397.700" y="1368">1</text></g>
      </svg>
    </section>
    <section class="card chart-card">
      <header class="chart-head"><h2>Ambang Gangguan</h2>
        <svg class="tools" width="46" height="16" viewBox="0 0 46 16"><path d="M1 11.500 7.500 5 14 11.500M33.500 2 46 14.500M46 2 33.500 14.500"/></svg></header>
      <svg class="chart" width="506" height="430" viewBox="707 1158 506 430">
        <path fill="#5fac35" d="M896.500 1203h54.500v17h-54.500z"/>
        <g class="legend"><text x="958.500" y="1215.700">Konser</text></g>
        <circle cx="960" cy="1394.700" r="119" fill="none" stroke="#5fac35" stroke-width="77"/>
        <path d="M960 1236v80" stroke="#fff" stroke-width="2.700"/>
        <g class="value"><text x="959.500" y="1517">1</text></g>
      </svg>
    </section>
    <section class="card chart-card">
      <header class="chart-head"><h2>Sebab Kepadatan</h2>
        <svg class="tools" width="46" height="16" viewBox="0 0 46 16"><path d="M1 11.500 7.500 5 14 11.500M33.500 2 46 14.500M46 2 33.500 14.500"/></svg></header>
      <svg class="chart" width="506" height="430" viewBox="1247 1158 506 430">
        <circle cx="1500" cy="1373" r="179.200" fill="#144c68"/>
        <path d="M1500 1193v180.500" stroke="#fff" stroke-width="2.700"/>
        <g class="value"><text x="1499.500" y="1467">1</text></g>
      </svg>
    </section>
  </div>
</main>
<footer class="footer">Copyright ©2021 . All rights reserved.</footer>
<a class="to-top upper"><svg width="15" height="10" viewBox="0 0 15 10"><path d="M2 8 7.500 2.500 13 8" fill="none" stroke="#fff" stroke-width="2"/></svg></a>
<a class="to-top lower"><svg width="15" height="10" viewBox="0 0 15 10"><path d="M2 8 7.500 2.500 13 8" fill="none" stroke="#fff" stroke-width="2"/></svg></a>
</body>
</html>
```
FILE: styles.css
```css
* { box-sizing: border-box; }
body { margin: 0; position: relative; min-height: 1705px; background: #f3f6ff; color: #212529; font: 400 18.9px/1.4 Roboto, "Liberation Sans", sans-serif; display: flex; flex-direction: column; }
p, h2 { margin: 0; }
svg { display: block; flex: none; }
button { border: 0; padding: 0; background: #fff; font-family: inherit; }
.container { width: 1588px; margin: 0 auto; }
.card { background: #fff; border: 1px solid #dbe0ea; border-radius: 7px; box-shadow: 0 11px 27px rgba(28, 45, 60, .09); }

/* Top bar */
.topbar { height: 101px; background: #fff; border-bottom: 1px solid #d8dfed; position: relative; z-index: 2; }
.topbar-inner { display: flex; justify-content: space-between; padding-top: 21px; }
.logo-word { font: 700 25.500px Roboto, sans-serif; fill: #111; }
.logo-sign { font: 700 4px Roboto, sans-serif; fill: #222; }
.user { display: flex; align-items: flex-start; }
.shrink { margin: 19px 46px 0 0; }
.user-text { display: flex; flex-direction: column; align-items: flex-end; width: 70px; margin-right: 16.500px; padding-top: 15px; line-height: 18px; }
.user-name { font-weight: 500; font-size: 18.700px; color: #001737; }
.user-role { font-size: 16.500px; color: #97a3b2; }
.avatar { margin-top: -1px; }

/* Menu */
.menu { height: 79px; background: #fff; border-bottom: 1px solid #d8dfe8; box-shadow: 0 11px 54px rgba(28, 45, 60, .11); position: relative; }
.menu-inner { display: flex; }
.menu-item { display: flex; height: 77px; padding: 0 32px; color: #001737; font-weight: 500; line-height: 76px; font-size: 18.900px; }
.menu-item.active { color: #4d34d6; border-bottom: 2px solid #4d34d6; }
.at { width: 34px; font: 400 22.500px/68px "Liberation Sans", Arial, sans-serif; }
.doc { margin: 22px 12px 0 0; }
.trend { margin: 24px 11px 0 1px; }
.caret { margin: 31px 0 0 6px; }

/* Statistics */
.content { padding: 25px 0 32px; position: relative; }
.stats { height: 136px; overflow: clip; margin-bottom: 32px; }
.stats-row { display: grid; grid-template-columns: repeat(4, 404px); margin: 0 -15px; padding-top: 1px; height: 100%; }
.stat { display: flex; justify-content: center; gap: 33px; border-right: 1px solid #dde1ea; }
.stat-icon { width: 41px; height: 41px; margin-top: 47px; fill: none; stroke-width: 2; stroke-linecap: round; stroke-linejoin: round; }
.orange { stroke: #f7821b; }
.red { stroke: #ff1f4f; }
.blue { stroke: #2e93ff; }
.green { stroke: #38c01e; }
.stat-label { margin-top: 32px; line-height: 28px; }
.stat-value { font-size: 32px; font-weight: 500; line-height: 38px; margin-top: 3px; }

/* Map */
.map-card { height: 675px; padding: 33px; margin-bottom: 33px; }
.map { position: relative; width: 1520px; height: 608px; overflow: hidden; }
.tile path { vector-effect: non-scaling-stroke; stroke-linejoin: round; }
.built { fill: #fef5dc; }
.park { fill: #ceedcf; }
.clinic { fill: #fde3e3; }
.rail, .creek, .brook, .canal, .river, .lane, .street, .road, .avenue { fill: none; }
.rail { stroke: #d2d3d6; stroke-width: 1.200; }
.creek { stroke: #aadaff; stroke-width: 1.200; }
.brook { stroke: #aadaff; stroke-width: 2; }
.canal { stroke: #aadaff; stroke-width: 3.200; }
.river { stroke: #aadaff; stroke-width: 4.200; }
.lane { stroke: #fff; stroke-width: 1.300; }
.street { stroke: #fff; stroke-width: 2; }
.road { stroke: #fff; stroke-width: 2.300; }
.avenue { stroke: #fff; stroke-width: 3; }
.casing, .surface { fill: none; stroke-linejoin: round; }
.casing { stroke: #f5cf6f; stroke-width: 7; }
.surface { stroke: #ffeba6; stroke-width: 4.600; }
/* White halo that lifts the labels off the roads */
.street-name, .place { filter: drop-shadow(0 0 .7px #fff) drop-shadow(0 0 .7px #fff) drop-shadow(0 0 .7px #fff); }
.street-name text, .place text { font-family: Roboto, sans-serif; }
.street-name text { font-size: 11.800px; font-weight: 500; fill: #737c84; }
.place text { font-size: 19px; }
.teal text { fill: #1c8e99; }
.leaf text { fill: #248b43; }
.medic text { fill: #df3b31; }
.slate text { fill: #587685; }
.place .town { font-size: 17.500px; fill: #5d646b; }
.place .district { font-size: 16.500px; font-weight: 700; fill: #8797b2; }
.place .city { font-size: 24px; font-weight: 500; fill: #47505a; }
.shield-no { font: 500 11.500px Roboto, sans-serif; fill: #555; text-anchor: middle; }
.google { font: 500 26px Inter, sans-serif; filter: drop-shadow(0 0 1px #fff); }
.map-type { position: absolute; left: 13px; top: 14px; display: flex; height: 54px; border-radius: 3px; overflow: hidden; box-shadow: 0 1px 5px -1px rgba(0, 0, 0, .3); }
.map-type button { font-size: 24px; line-height: 54px; }
.type-on { width: 96px; font-weight: 500; color: #000; }
.type-off { width: 114px; color: #565656; box-shadow: 0 0 4px rgba(0, 0, 0, .22); }
.map-btn, .zoom { position: absolute; right: 13px; width: 54px; border-radius: 3px; background: #fff; box-shadow: 0 1px 5px -1px rgba(0, 0, 0, .35); }
.map-btn { height: 54px; display: grid; place-items: center; }
.fullscreen { top: 14px; }
.pegman { top: 370px; }
.zoom { top: 467px; height: 110px; display: flex; flex-direction: column; align-items: center; }
.zoom button { flex: 1; display: grid; place-items: center; }
.zoom i { width: 41px; height: 1px; background: #dedede; }
.credits { position: absolute; right: 0; bottom: 0; display: flex; height: 19px; line-height: 19px; font-size: 13.450px; color: #111; background: rgba(245, 245, 245, .7); }
.credits span { padding: 0 8px; margin-right: 1px; white-space: nowrap; }
.credits span:last-child { margin-right: 0; }

/* Charts */
.charts { display: grid; grid-template-columns: repeat(3, 508px); gap: 32px; }
.chart-card { height: 508px; }
.chart-head { height: 76px; border-bottom: 1px solid #dee1e6; display: flex; justify-content: space-between; padding: 0 26.500px 0 33px; }
.chart-head h2 { font-size: 20.200px; font-weight: 500; line-height: 74px; }
.tools { margin-top: 30px; fill: none; stroke: #001737; stroke-width: 1.700; }
.legend text { font: 16.200px "Liberation Sans", Arial, sans-serif; fill: #666; }
.value text { font: 16.200px "Liberation Sans", Arial, sans-serif; fill: #666; text-anchor: middle; }
.slices path { stroke: #fff; stroke-width: 2.700; stroke-linejoin: bevel; }

.footer { height: 83px; margin-top: auto; background: #fff; border-top: 1px solid #d8dfea; text-align: center; line-height: 81px; position: relative; }
.to-top { position: absolute; left: 1826px; width: 67px; height: 67px; border-radius: 4px; background: rgba(77, 52, 214, .75); display: grid; place-items: center; }
.upper { top: 830px; }
.lower { top: 1611px; }
.to-top svg { margin-bottom: 4px; }
```
